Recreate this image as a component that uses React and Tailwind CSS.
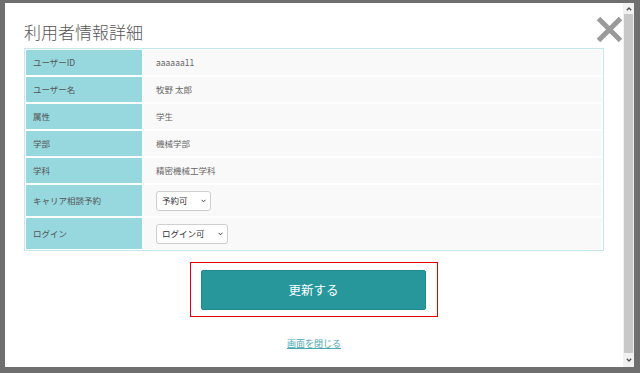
import React from 'react';

const rows = [
  { label: 'ユーザーID', value: 'aaaaaa11' },
  { label: 'ユーザー名', value: '牧野 太郎' },
  { label: '属性', value: '学生' },
  { label: '学部', value: '機械学部' },
  { label: '学科', value: '精密機械工学科' },
];

const FakeSelect = ({ value, width }) => (
  <div
    role="listbox"
    className={`flex h-[20px] items-center justify-between rounded-[3px] border border-[#cfcfcf] bg-white pl-[5px] pr-[4px] text-[8.5px] text-[#333] ${width}`}
  >
    <span>{value}</span>
    <svg width="5" height="4" viewBox="0 0 5 4">
      <path d="M0.5 0.8 L2.5 2.8 L4.5 0.8" fill="none" stroke="#444" strokeWidth="1" />
    </svg>
  </div>
);

const App = () => {
  return (
    <div
      className="flex h-[373px] w-[640px] bg-[#6f6f6f] pb-[6px] pl-[5px] pr-[6px] pt-[3px]"
      style={{ fontFamily: '"Noto Sans CJK JP", "Noto Sans", sans-serif' }}
    >
      <div className="relative flex flex-1 flex-col bg-white px-[19px]">
        <h1 className="mt-[17px] text-[17px] leading-[24px] font-light text-[#555]">利用者情報詳細</h1>

        <button className="absolute right-0 top-[13px]" aria-label="close">
          <svg width="27" height="27" viewBox="0 0 27 27">
            <path d="M2.5 2.5 L24.5 24.5 M24.5 2.5 L2.5 24.5" stroke="#9a9a9a" strokeWidth="5" />
          </svg>
        </button>

        <div className="mt-[4px] flex flex-col gap-[2px] border border-[#c4e8ec] p-[1px]">
          {rows.map((r) => (
            <div key={r.label} className="flex h-[25px] gap-[1px]">
              <div className="flex w-[116px] items-center bg-[#97d7de] pl-[7px] text-[8.5px] text-[#555]">
                {r.label}
              </div>
              <div className="flex flex-1 items-center bg-[#f9f9f9] pl-[13px] text-[8.5px] text-[#666]">
                {r.value}
              </div>
            </div>
          ))}
          <div className="flex h-[31px] gap-[1px]">
            <div className="flex w-[116px] items-center bg-[#97d7de] pl-[7px] text-[8.5px] text-[#555]">
              キャリア相談予約
            </div>
            <div className="flex flex-1 items-center bg-[#f9f9f9] pl-[13px]">
              <FakeSelect value="予約可" width="w-[55px]" />
            </div>
          </div>
          <div className="flex h-[31px] gap-[1px]">
            <div className="flex w-[116px] items-center bg-[#97d7de] pl-[7px] text-[8.5px] text-[#555]">
              ログイン
            </div>
            <div className="flex flex-1 items-center bg-[#f9f9f9] pl-[13px]">
              <FakeSelect value="ログイン可" width="w-[72px]" />
            </div>
          </div>
        </div>

        <div className="mx-auto mt-[11px] h-[55px] w-[248px] border border-[#e00000] pl-[10px] pt-[7px]">
          <button className="h-[40px] w-[225px] rounded-[2px] border border-[#1f898e] bg-[#27979c] text-[12.5px] text-white">
            更新する
          </button>
        </div>

        <div className="mt-[16px] text-center leading-[14px]">
          <a href="#" className="text-[9px] text-[#4aa8b0] underline">
            画面を閉じる
          </a>
        </div>
      </div>

      <div className="flex w-[11px] flex-col bg-[#f1f1f1]">
        <div className="flex h-[11px] items-center justify-center">
          <svg width="6" height="4" viewBox="0 0 6 4">
            <path d="M0.8 3.3 L3 1 L5.2 3.3" fill="none" stroke="#505050" strokeWidth="1.3" />
          </svg>
        </div>
        <div className="mx-[1px] flex-1 bg-[#c8c8c8]" />
        <div className="flex h-[14px] items-center justify-center">
          <svg width="6" height="4" viewBox="0 0 6 4">
            <path d="M0.8 0.7 L3 3 L5.2 0.7" fill="none" stroke="#505050" strokeWidth="1.3" />
          </svg>
        </div>
      </div>
    </div>
  );
};

export default App;
